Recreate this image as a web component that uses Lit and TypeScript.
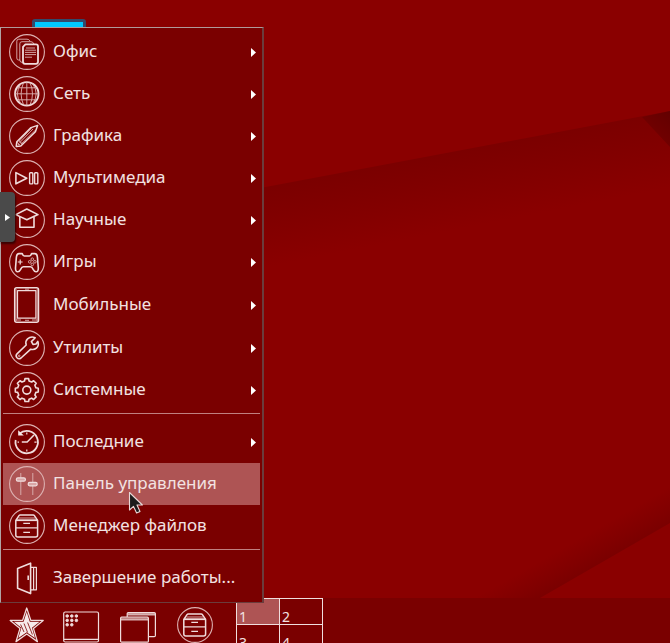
import { LitElement, html, css, svg } from "lit";
import { customElement, property } from "lit/decorators.js";
import { classMap } from "lit/directives/class-map.js";

const ring = svg`<circle class="ring" cx="18" cy="18" r="17.4"/>`;

const cabinet = svg`
  <path stroke-width="1.5" d="M6.8 12.5 10 7.6Q10.4 7 11.2 7H24.2Q25 7 25.4 7.6L28.6 12.5V27Q28.6 29 26.6 29H8.8Q6.8 29 6.8 27Z"/>
  <path d="M7 12.2H28.4" stroke-width="1.8"/>
  <path d="M7 19.8H28.4M14.3 15.4H21M14.3 24.4H21"/>
  <path class="thin" d="M9.5 10H26"/>`;

const gear = (() => {
  const pts: string[] = [];
  for (let i = 0; i < 8; i++) {
    for (const [off, r] of [[-14, 9.4], [-9, 11.6], [9, 11.6], [14, 9.4]]) {
      const a = ((i * 45 + off) * Math.PI) / 180;
      pts.push(`${(17.8 + r * Math.sin(a)).toFixed(2)},${(18.1 - r * Math.cos(a)).toFixed(2)}`);
    }
  }
  return pts.join(" ");
})();

const glyphs: Record<string, unknown> = {
  office: svg`${ring}
    <path class="thin" d="M11 26H9.5Q7.8 26 7.8 24V7.2Q7.8 5.2 9.8 5.2H18Q20 5.2 21 7M13.6 28.5Q10.8 28.5 10.8 26V9.8Q10.8 7.7 13 7.7H22Q24 7.7 25 10"/>
    <path d="M16.4 10.3H27Q29 10.3 29 12.3V27.8Q29 29.8 27 29.8H16Q14 29.8 14 27.8V12.8Z" stroke-width="1.8"/>
    <path class="thin" d="M17 14H26M16 16.2H27M16 18.4H27M16 20.6H27M16 23.2H23"/>`,
  network: svg`${ring}<circle cx="17.8" cy="17.8" r="11.7" stroke-width="1.9"/>
    <path class="thin" d="M17.8 6V29.6M6 17.8H29.6M8 11.8H27.6M8 23.8H27.6M14.6 6.6Q9.6 17.8 14.6 29M21 6.6Q26 17.8 21 29M12 7.6Q4.8 17.8 12 28M23.6 7.6Q30.8 17.8 23.6 28"/>`,
  graphics: svg`${ring}<path stroke-width="1.5" d="M28.6 7.4 22 9.6 7.8 23.8 7.2 28.4 11.8 28 26.4 13.8Z"/>
    <path class="thin" d="M8 24 11.6 27.8M23 9.6 10 23.4 12.4 25.8 26 12.6M9.6 22.2 13.4 26M24 11 11 24.4M8.6 25.6 10.2 27.3"/>`,
  media: svg`${ring}<path d="M6.9 12.6 17.8 18.2 6.9 23.8Z" stroke-width="1.6"/>
    <rect x="20.6" y="12.7" width="3.2" height="11.2" rx="0.8" stroke-width="1.4"/><rect x="25.6" y="12.7" width="3.2" height="11.2" rx="0.8" stroke-width="1.4"/>`,
  science: svg`${ring}<path d="M17.8 7 29 12.6 17.8 17.8 6.8 12.6Z" stroke-width="1.6"/>
    <path d="M10.8 15V25.3H25V15" stroke-width="1.6"/>`,
  games: svg`${ring}<path d="M10 9.6H13.2Q14 12 15.4 12H20.4Q21.8 12 22.6 9.6H25.8Q28 9.6 28.4 13L29.3 24Q29.4 27.8 27 27.8 25.4 27.8 24.2 25.4 23 22.8 21.4 22.8H14.4Q12.8 22.8 11.6 25.4 10.4 27.8 8.8 27.8 6.4 27.8 6.5 24L7.4 13Q7.8 9.6 10 9.6Z" stroke-width="1.6"/>
    <path d="M11.2 15.6V20.4M8.8 18H13.6"/>
    <g class="thin"><circle cx="23.3" cy="15.2" r="1.3"/><circle cx="23.3" cy="20.4" r="1.3"/><circle cx="20.7" cy="17.8" r="1.3"/><circle cx="25.9" cy="17.8" r="1.3"/></g>`,
  mobile: svg`<rect x="5.7" y="0.7" width="23.8" height="34.6" rx="2" stroke-width="1.5"/>
    <rect x="8.5" y="3.6" width="18.4" height="27.6"/>
    <path d="M16 2.1H20M16 33.3H20M7 2V34M28.2 2V34M7 33H12M23 33H28" class="thin"/>`,
  tools: svg`${ring}<path d="M26.2 7.7 22.4 11.6 24 14.4 27 14 28.8 11.4Q30.4 15.6 27.4 18.2 25 20.2 21.8 19.2L12 28Q9.8 29.6 8 27.8 6.2 25.8 8 23.8L17.2 15Q16 11.4 18.6 8.8 21.8 6 26.2 7.7Z" stroke-width="1.6"/>
    <circle class="thin" cx="10.2" cy="25.8" r="0.8"/>`,
  system: svg`${ring}<polygon points=${gear} stroke-width="1.6"/><circle cx="17.8" cy="18.1" r="4" stroke-width="1.6"/>`,
  recent: svg`${ring}<path d="M10.4 9.6A11.2 11.2 0 1 1 6.7 16" stroke-width="1.8"/>
    <path d="M9.2 6.2V11.4H14.8Z" class="solid"/>
    <path d="M12.8 18.1H18.2L25 11" stroke-width="1.5"/>
    <path d="M17.8 8.4V10.6M17.8 25.4V27.6M25.4 18.1H27.6M8.6 18.1H10"/>`,
  control: svg`${ring}<path class="thin" d="M11.8 7V29M23.8 7V29" stroke-width="1.2"/>
    <rect class="knob" x="7.4" y="11.8" width="9" height="3.4" rx="1.5"/><rect class="knob" x="19.2" y="16.4" width="9" height="3.4" rx="1.5"/>`,
  files: svg`${ring}${cabinet}`,
  exit: svg`<path d="M21.6 3.2V33.6L8.6 28.2V8.4Z" stroke-width="1.6"/>
    <path d="M22 7.4H27.4V29.8H22M24.6 8V29.4"/><path d="M19.2 15.6V20" stroke-width="1.6"/>`,
  star: svg`<path d="M20.7 1 24.8 13.4H37.2L27.4 21.4 31.4 34.6 20.7 27 10 34.6 14 21.4 4.2 13.4H16.6Z" stroke-width="1.3"/>
    <path class="solid" d="M20.7 5 23.8 14.8H33.6L26 20.8 29 31 20.7 25.2 12.4 31 15.4 20.8 7.8 14.800H17.600Z"/>
    <path class="gap" d="M14.600 17.500 18 25M18 16.500 21.600 25.500M21.600 15.500 26.400 27.500"/>`,
  desktop: svg`<rect x="0.7" y="5" width="34.8" height="30" rx="1.5"/><path d="M1 32.4H35.4"/>
    <g class="thin">${[9, 13.4, 17.8].map((y, r) => [4.2, 8.8, 13.4].slice(0, r === 2 ? 2 : 3).map((x) => svg`<circle class="dot" cx=${x} cy=${y} r="1.3"/>`))}</g>`,
  windows: svg`<path d="M7.2 10V6.6Q7.2 5.6 8.2 5.6H34.2Q35.4 5.6 35.4 6.8V28.4Q35.4 29.6 34.2 29.6H28.6"/><path d="M7.400 7.400H35.200M0.800 12.400H28.200" stroke-width="2.200" opacity="0.800"/>
    <rect x="0.6" y="10.2" width="27.8" height="25" rx="1"/>`,
  none: svg``,
};

@customElement("line-icon")
export class LineIcon extends LitElement {
  @property() name = "none";

  static styles = css`
    :host { display: block; width: 36px; height: 36px; }
    .icon { display: block; width: 36px; height: 36px; overflow: visible; fill: none; stroke: #f0dcdc; stroke-width: 1.2; stroke-linejoin: round; }
    .ring { stroke: #dcb0b0; stroke-width: 1.1; }
    .thin { stroke: #dcb4b4; stroke-width: 0.9; }
    .solid { fill: #f6eaea; stroke: none; }
    .knob { fill: #d9a6a6; }
    .dot { fill: #f0dcdc; stroke: #f0dcdc; }
    .gap { stroke: #7a0000; stroke-width: 0.8; }
  `;

  render() {
    return html`<svg class="icon" viewBox="0 0 36 36" aria-hidden="true">${glyphs[this.name]}</svg>`;
  }
}

interface Entry { icon: string; label: string; sub?: boolean; active?: boolean }

const groups: Entry[][] = [
  [
    { icon: "office", label: "Офис", sub: true },
    { icon: "network", label: "Сеть", sub: true },
    { icon: "graphics", label: "Графика", sub: true },
    { icon: "media", label: "Мультимедиа", sub: true },
    { icon: "science", label: "Научные", sub: true },
    { icon: "games", label: "Игры", sub: true },
    { icon: "mobile", label: "Мобильные", sub: true },
    { icon: "tools", label: "Утилиты", sub: true },
    { icon: "system", label: "Системные", sub: true },
  ],
  [
    { icon: "recent", label: "Последние", sub: true },
    { icon: "control", label: "Панель управления", active: true },
    { icon: "files", label: "Менеджер файлов" },
  ],
  [{ icon: "exit", label: "Завершение работы..." }],
];

const launchers = [
  { icon: "star", label: "Меню" },
  { icon: "desktop", label: "Рабочий стол" },
  { icon: "windows", label: "Окна" },
  { icon: "files", label: "Файлы" },
];

@customElement("app-root")
export class AppRoot extends LitElement {
  static styles = css`
    :host { display: block; font-family: "Noto Sans", sans-serif; color: #f2e2e2; }
    * { box-sizing: border-box; }
    button { margin: 0; padding: 0; border: 0; background: none; color: inherit; font: inherit; text-align: left; }
    .screen { position: relative; display: flex; flex-direction: column; min-height: 100vh; overflow: hidden; background: #8a0000; }
    .wallpaper { position: absolute; inset: 0; width: 100%; height: 100%; }
    .desktop { flex: 1; }
    .shortcut { position: absolute; left: 32px; top: 19px; width: 54px; height: 40px; border: 3px solid #334a6c; border-radius: 3px; background: #00c8ff; }

    .menu { position: absolute; left: 0; bottom: 40px; width: 264px; padding: 3px 2px; background: #7a0000;
      border: 1px solid; border-color: #b09a9a #6b3c3c #6b3c3c #b0a4a4; border-right-width: 2px; }
    .row { display: flex; align-items: center; width: 100%; height: 42px; padding: 0 4px 0 6px; gap: 8px; font-size: 17px; line-height: 24px; }
    .row.tall { height: 44px; }
    .row.active { background: #ae5454; }
    .label { flex: 1; padding-bottom: 2px; white-space: nowrap; }
    .arrow { width: 5px; height: 9px; fill: #fff; }
    .rule { height: 1px; margin: 2px 0 7px; border: 0; background: #c08080; }

    .handle { position: absolute; left: 0; top: 192px; width: 15px; height: 50px; display: flex; align-items: center; justify-content: center;
      background: #4a4a4a; border-radius: 0 4px 4px 0; box-shadow: 1px 2px 2px #3a0000; }
    .pointer { position: absolute; left: 128px; top: 491px; width: 16px; height: 24px; }

    .bar { position: relative; display: flex; height: 45px; padding-left: 6px; background: #7a0000; }
    .launchers { display: flex; gap: 21px; padding-top: 9px; }
    .launch { height: 36px; }
    .pager { display: grid; grid-template-columns: 42px 42px; grid-auto-rows: 25px; gap: 1px; height: 54px; margin-left: 23px; padding: 1px; background: #f0dede; }
    .desk { display: flex; align-items: flex-end; padding-left: 2px; background: #7a0000; font-size: 14px; line-height: 14px; }
    .desk.on { background: #ae5454; }
  `;

  private row(e: Entry) {
    return html`<button role="menuitem" class=${classMap({ row: true, active: !!e.active, tall: e.icon === "mobile" })}>
      <line-icon name=${e.icon}></line-icon>
      <span class="label">${e.label}</span>
      ${e.sub ? html`<svg class="arrow" viewBox="0 0 5 9" aria-hidden="true"><path d="M0 0 5 4.5 0 9Z"/></svg>` : ""}
    </button>`;
  }

  render() {
    return html`<div class="screen">
      <svg class="wallpaper" viewBox="0 0 670 643" preserveAspectRatio="none" aria-hidden="true">
        <defs>
          <linearGradient id="fold" gradientUnits="userSpaceOnUse" x1="460" y1="150" x2="475" y2="226">
            <stop offset="0" stop-color="#7b0000"/><stop offset="0.35" stop-color="#800000"/><stop offset="1" stop-color="#8a0000"/>
          </linearGradient>
          <linearGradient id="ridge" gradientUnits="userSpaceOnUse" x1="605" y1="561" x2="589" y2="533">
            <stop offset="0" stop-color="#7a0000"/><stop offset="0.4" stop-color="#810000"/><stop offset="1" stop-color="#8a0000"/>
          </linearGradient>
          <linearGradient id="tip" gradientUnits="userSpaceOnUse" x1="672" y1="112" x2="652" y2="134">
            <stop offset="0" stop-color="#620000"/><stop offset="1" stop-color="#720000"/>
          </linearGradient>
        </defs>
        <path fill="url(#fold)" d="M263 187.500 670 111V195L263 270Z"/>
        <path fill="url(#tip)" d="M642 117 670 111V147Z"/>
        <path fill="url(#ridge)" d="M540 598 670 523V480L460 598Z"/>
      </svg>
      <main class="desktop"><div class="shortcut"></div></main>
      <footer class="bar">
        <nav class="launchers">
          ${launchers.map((l) => html`<button class="launch" aria-label=${l.label}><line-icon name=${l.icon}></line-icon></button>`)}
        </nav>
        <div class="pager">
          ${[1, 2, 3, 4].map((n) => html`<button class=${classMap({ desk: true, on: n === 1 })}>${n}</button>`)}
        </div>
      </footer>
      <div class="menu" role="menu">
        ${groups.map((g, i) => html`${i ? html`<hr class="rule">` : ""}${g.map((e) => this.row(e))}`)}
      </div>
      <button class="handle" aria-label="Показать панель">
        <svg class="arrow" viewBox="0 0 5 9" aria-hidden="true"><path d="M0 1 5 4.500 0 8Z"/></svg>
      </button>
      <svg class="pointer" viewBox="0 0 16 24" aria-hidden="true">
        <path d="M1.500 1.500V19L5.500 15.400 8.600 22 12 20.400 9 14H14.400Z" fill="#1c1c1c" stroke="#e8d8d8" stroke-width="1.100" stroke-linejoin="round"/>
      </svg>
    </div>`;
  }
}
